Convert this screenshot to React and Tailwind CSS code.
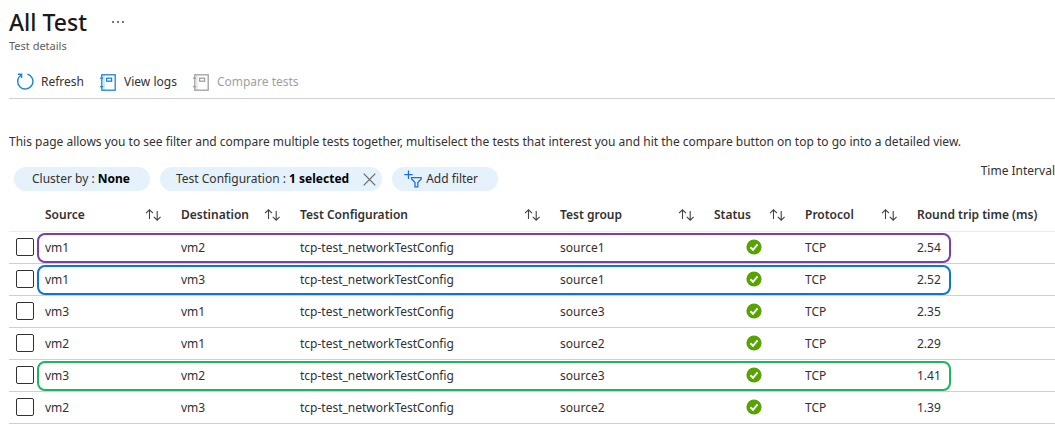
const columns = [
  { label: "Source", width: "w-[136px]", sortable: true },
  { label: "Destination", width: "w-[119px]", sortable: true },
  { label: "Test Configuration", width: "w-[260px]", sortable: true },
  { label: "Test group", width: "w-[154px]", sortable: true },
  { label: "Status", width: "w-[91px]", sortable: true },
  { label: "Protocol", width: "w-[112px]", sortable: true },
  { label: "Round trip time (ms)", width: "", sortable: false },
];

const tests = [
  { source: "vm1", destination: "vm2", group: "source1", rtt: "2.54", outline: "border-[#7a3fa8]" },
  { source: "vm1", destination: "vm3", group: "source1", rtt: "2.52", outline: "border-[#0f78c4]" },
  { source: "vm3", destination: "vm1", group: "source3", rtt: "2.35" },
  { source: "vm2", destination: "vm1", group: "source2", rtt: "2.29" },
  { source: "vm3", destination: "vm2", group: "source3", rtt: "1.41", outline: "border-[#1cb562]" },
  { source: "vm2", destination: "vm3", group: "source2", rtt: "1.39" },
];

function RefreshIcon() {
  return (
    <svg className="size-[18px]" viewBox="0 0 18 18" fill="none" stroke="#1b83d8" strokeWidth="1.4" aria-hidden="true">
      <path d="M11.4 1.1A7.6 7.6 0 1 1 5.2 2" />
      <path d="M1.8 1.2H5.6V5" />
    </svg>
  );
}

function LogIcon({ className }) {
  return (
    <svg className={className} viewBox="0 0 17 17" fill="none" stroke="currentColor" strokeWidth="1.3" aria-hidden="true">
      <rect x="1.8" y="0.8" width="13.4" height="15.4" />
      <path d="M4 0.8V16.2" strokeWidth="0.4" />
      <rect x="6.6" y="4.2" width="5" height="3" />
      <path d="M0 4.2H3.2M0 12.6H3.2" />
    </svg>
  );
}

function SortIcon() {
  return (
    <svg className="h-3 w-4" viewBox="0 0 16 12" fill="none" stroke="#444" strokeWidth="1.1" aria-hidden="true">
      <path d="M4.5 10V0.8M1 4.2L4.5 0.8L8 4.2" />
      <path d="M12.2 2V11.2M8.8 7.8L12.2 11.2L15.6 7.8" />
    </svg>
  );
}

function AddFilterIcon() {
  return (
    <svg className="size-[18px]" viewBox="0 0 18 18" fill="none" stroke="#1f6fe0" strokeWidth="1.3" aria-hidden="true">
      <path d="M4.5 0.5V9M0.3 4.7H8.7" />
      <path d="M7.6 7.6H17.2V9L13.8 12.6V16.8H11V12.6L7.6 9Z" />
    </svg>
  );
}

function SuccessIcon() {
  return (
    <svg className="mx-auto size-4" viewBox="0 0 16 16" role="img" aria-label="Succeeded">
      <circle cx="8" cy="8" r="7.6" fill="#57a300" />
      <path d="M4.4 8.3L7 10.8L11.6 5.4" fill="none" stroke="#fff" strokeWidth="1.9" />
    </svg>
  );
}

export default function App() {
  return (
    <main className="overflow-hidden bg-white pt-2 pb-2 pl-[9px] font-['Noto_Sans','Open_Sans',sans-serif] text-xs text-[#323130]">
      <header>
        <div className="flex items-center gap-6">
          <h1 className="text-[23px] leading-7 font-medium text-[#1b1a19]">All Test</h1>
          <button type="button" aria-label="More options" className="flex gap-[3px] px-px">
            <span className="size-[2px] bg-[#777]" />
            <span className="size-[2px] bg-[#777]" />
            <span className="size-[2px] bg-[#777]" />
          </button>
        </div>
        <p className="mt-0.5 text-[11px] leading-4 text-[#605e5c]">Test details</p>
      </header>

      <div className="mt-3 flex h-[33px] items-center gap-4 border-b border-[#d2d0ce] pl-[7px]">
        <button type="button" className="flex items-center gap-[7px]">
          <RefreshIcon />
          Refresh
        </button>
        <button type="button" className="flex items-center gap-[7px]">
          <LogIcon className="size-[17px] text-[#1b83d8]" />
          View logs
        </button>
        <button type="button" disabled className="flex items-center gap-[7px] text-[#a19f9d]">
          <LogIcon className="size-[17px] text-[#a19f9d]" />
          Compare tests
        </button>
      </div>

      <p className="mt-[35px] leading-4">
        This page allows you to see filter and compare multiple tests together, multiselect the tests that interest you and hit the compare button on top to go into a detailed view.
      </p>

      <div className="mt-[13px] flex items-start justify-between pl-[5px]">
        <div className="mt-1 flex gap-2.5">
          <button type="button" className="h-6 rounded-full bg-[#e5f1fb] pr-5 pl-[18px]">
            Cluster by : <b className="font-bold text-black">None</b>
          </button>
          <div className="flex h-6 items-center gap-3.5 rounded-full bg-[#e5f1fb] pr-1.5 pl-4">
            <button type="button">
              Test Configuration : <b className="font-bold text-black">1 selected</b>
            </button>
            <button type="button" aria-label="Remove filter">
              <svg className="size-[13px]" viewBox="0 0 13 13" stroke="#666" strokeWidth="1.2" aria-hidden="true">
                <path d="M0.7 0.7L12.3 12.3M12.3 0.7L0.7 12.3" />
              </svg>
            </button>
          </div>
          <button type="button" className="flex h-6 items-center gap-1 rounded-full bg-[#e5f1fb] pr-5 pl-3">
            <AddFilterIcon />
            Add filter
          </button>
        </div>
        <span className="leading-4 whitespace-nowrap">Time Interval</span>
      </div>

      <table className="mt-2 w-full table-fixed border-collapse text-left">
        <thead>
          <tr className="h-8 border-b border-[#edebe9]">
            <td className="w-9" />
            {columns.map((column) => (
              <th key={column.label} scope="col" className={`${column.width} p-0 font-semibold whitespace-nowrap`}>
                <div className="flex items-center justify-between pr-5">
                  {column.label}
                  {column.sortable && (
                    <button type="button" aria-label={`Sort by ${column.label}`}>
                      <SortIcon />
                    </button>
                  )}
                </div>
              </th>
            ))}
          </tr>
        </thead>
        <tbody>
          {tests.map((test, index) => (
            <tr key={index} className="relative h-8 border-b border-[#d2d0ce]">
              <td className="p-0 pl-[7px]">
                <input
                  type="checkbox"
                  aria-label={`Select ${test.source} to ${test.destination}`}
                  className="block size-[18px] appearance-none rounded-[2px] border border-[#323130] bg-white"
                />
                {test.outline && (
                  <span
                    className={`pointer-events-none absolute top-0.5 right-[104px] -bottom-px left-7 rounded-lg border-2 ${test.outline}`}
                  />
                )}
              </td>
              <td className="p-0 pt-0.5">{test.source}</td>
              <td className="p-0 pt-0.5">{test.destination}</td>
              <td className="p-0 pt-0.5">tcp-test_networkTestConfig</td>
              <td className="p-0 pt-0.5">{test.group}</td>
              <td className="p-0 pr-[11px]">
                <SuccessIcon />
              </td>
              <td className="p-0 pt-0.5">TCP</td>
              <td className="p-0 pt-0.5">{test.rtt}</td>
            </tr>
          ))}
        </tbody>
      </table>
    </main>
  );
}
